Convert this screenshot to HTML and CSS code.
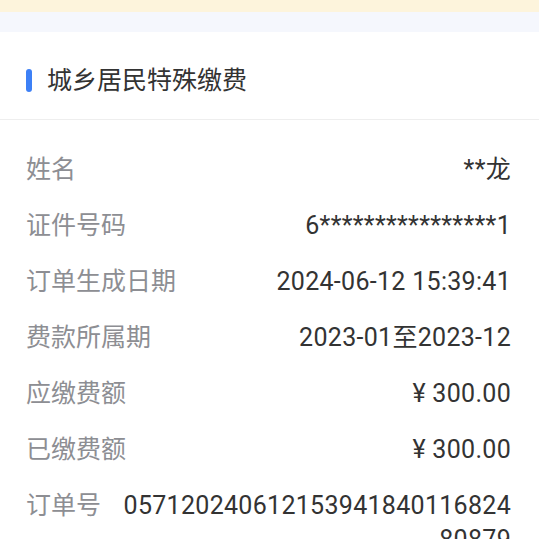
FILE: index.html
```html
<!DOCTYPE html>
<html lang="zh-CN">
<head>
    <meta charset="UTF-8">
    <meta name="viewport" content="width=device-width, initial-scale=1.0">
    <title>缴费详情</title>
    <link rel="stylesheet" href="styles.css">
</head>
<body>

<div class="notice-bar"></div>
<div class="gap-bar"></div>

<div class="detail-card">
    <div class="card-header">
        <span class="title-mark"></span>
        <span class="card-title">城乡居民特殊缴费</span>
    </div>

    <div class="info-list">
        <div class="info-row">
            <span class="info-label">姓名</span>
            <span class="info-value">**龙</span>
        </div>
        <div class="info-row">
            <span class="info-label">证件号码</span>
            <span class="info-value">6****************1</span>
        </div>
        <div class="info-row">
            <span class="info-label">订单生成日期</span>
            <span class="info-value">2024-06-12 15:39:41</span>
        </div>
        <div class="info-row">
            <span class="info-label">费款所属期</span>
            <span class="info-value">2023-01至2023-12</span>
        </div>
        <div class="info-row">
            <span class="info-label">应缴费额</span>
            <span class="info-value">¥ 300.00</span>
        </div>
        <div class="info-row">
            <span class="info-label">已缴费额</span>
            <span class="info-value">¥ 300.00</span>
        </div>
        <div class="info-row">
            <span class="info-label">订单号</span>
            <span class="info-value order-no">05712024061215394184011682480879</span>
        </div>
    </div>
</div>

</body>
</html>
```

FILE: styles.css
```css
body { margin: 0; background: #fff; font-family: Roboto, "Noto Sans CJK SC", sans-serif; font-size: 25px; color: #333; }
.notice-bar { height: 12px; background: #fdf4dc; }
.gap-bar { height: 20px; background: #f5f7fd; }
.detail-card { background: #fff; }
.card-header { height: 88px; box-sizing: border-box; padding: 10px 26px 0; display: flex; align-items: center; border-bottom: 1px solid #eeeeee; }
.title-mark { width: 6px; height: 23px; border-radius: 3px; background: #3d80f6; margin-right: 15px; }
.card-title { color: #333; line-height: 34px; }
.info-list { padding: 22px 28px 0 26px; }
.info-row { display: flex; justify-content: space-between; align-items: flex-start; padding: 11px 0; line-height: 34px; }
.info-label { color: #8d8e93; white-space: nowrap; margin-right: 22px; }
.info-value { color: #333; text-align: right; letter-spacing: 0.3px; }
.order-no { word-break: break-all; }
```
